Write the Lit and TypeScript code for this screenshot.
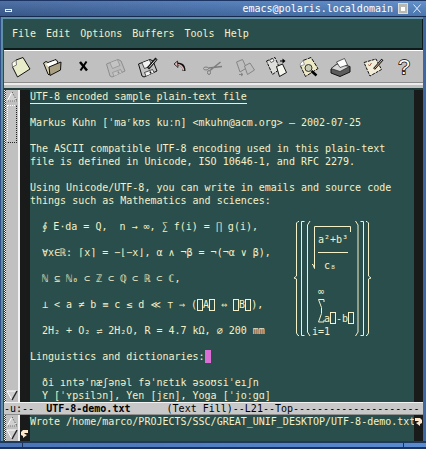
import { LitElement, html, svg, css } from "lit";
import { customElement } from "lit/decorators.js";

const MENUS = ["File", "Edit", "Options", "Buffers", "Tools", "Help"];

const INTRO = [
  "Markus Kuhn [ˈmaʳkʊs kuːn] <mkuhn@acm.org> — 2002-07-25",
  "",
  "The ASCII compatible UTF-8 encoding used in this plain-text",
  "file is defined in Unicode, ISO 10646-1, and RFC 2279.",
  "",
  "Using Unicode/UTF-8, you can write in emails and source code",
  "things such as Mathematics and sciences:",
  "",
];

const floppy = (stroke: string, fill: string, label: string) => svg`
  <path d="M2.5 9 L14 4.5 L17 6 L21 16 L8 22 L6 21 Z" fill=${fill} stroke=${stroke}/>
  <path d="M6 8 L8.5 13.5 L16 10.5 L13.5 5" fill=${label} stroke=${stroke} stroke-width="0.7"/>
  <path d="M10 21 L8.5 17.5 L16.5 14.5 L18 17.5" fill=${label} stroke=${stroke} stroke-width="0.7"/>
  <path d="M14 16.5 L15 18.5" stroke=${stroke} stroke-width="1.5"/>`;

const TOOLS = [
  { name: "New file", off: false, art: svg`
    <path d="M8 5 L15 2.5 L22 14 L9.500 22 L4.500 12 Z" fill="#e9ecc9" stroke="#111"/>
    <path d="M8 5 L4 8 L4.500 12 L8.500 10 Z" fill="#fbfbea" stroke="#777"/>` },
  { name: "Open", off: false, art: svg`
    <path d="M3.500 8 L6 6.500 L8 7.500 L16 4.500 L18 7 L9 20 L8 19 Z" fill="#d8d2b0" stroke="#111"/>
    <path d="M6 9 L15 5.500 L17.500 8 L9 12 Z" fill="#fff"/>
    <path d="M9 12 L21 7 L20.500 15 L10 20.500 Z" fill="#aaa084" stroke="#111"/>` },
  { name: "Close", off: false, art: svg`
    <path d="M8 7 L15 15.500" stroke="#000" stroke-width="2.500"/>
    <path d="M14.500 6.500 L8.500 15.500" stroke="#000" stroke-width="2"/>` },
  { name: "Save", off: true, art: floppy("#8d8d8d", "#bcbcbc", "#c4c4c4") },
  { name: "Save as", off: false, art: svg`${floppy("#111", "#c4c4c4", "#f2f2f2")}
    <path d="M20.500 3.500 L12 13.500" stroke="#111" stroke-width="3"/>
    <path d="M20 4.500 L13 12.500" stroke="#ddd" stroke-width="1"/>` },
  { name: "Undo", off: false, art: svg`
    <path d="M8 9 Q16 8 16 16" fill="none" stroke="#111" stroke-width="3"/>
    <path d="M8 9.500 Q14.500 9 15.500 15.500" fill="none" stroke="#e0b8b8" stroke-width="1.500"/>
    <path d="M9.500 6 L6 9 L10 12.500 Z" fill="#e0b8b8" stroke="#111" stroke-width="0.800"/>` },
  { name: "Cut", off: true, art: svg`
    <g fill="none" stroke="#7d7d7d">
      <ellipse cx="6" cy="13.500" rx="2.500" ry="1.500"/><ellipse cx="9" cy="17.500" rx="1.500" ry="2"/>
      <path d="M8.500 13 L22 11.500 M10 15.500 L20.500 7" stroke-width="1.500"/>
    </g>` },
  { name: "Copy", off: true, art: svg`
    <g fill="#bebebe" stroke="#858585">
      <path d="M4.500 7 L10.500 4.500 L14.500 13 L8 17 Z"/>
      <path d="M12.500 11 L18 8 L22.500 15 L15.500 19.500 Z"/>
      <path d="M7 19.500 h4 M9 18 l2 1.500 l-2 1.500" fill="none"/>
    </g>` },
  { name: "Paste", off: false, art: svg`
    <path d="M2.500 6 L11 2.500 L16 14 L8.500 19.500 Z" fill="#dededa" stroke="#111" stroke-dasharray="3 1"/>
    <path d="M5.500 5 L9 3.500 L10 6 L7 7.500 Z" fill="#fff" stroke="#333" stroke-width="0.700"/>
    <path d="M12.500 11.500 L18.500 9 L22.500 17.500 L15.500 21.500 Z" fill="#f5f5ee" stroke="#111"/>
    <path d="M16 6 h4" stroke="#000"/>
    <path d="M18.500 3.500 L21.500 6 L18.500 8.500 Z" fill="#000"/>` },
  { name: "Search", off: false, art: svg`
    <path d="M7 5.500 L15 2.500 L22 13.500 L9.500 21.500 L4.500 11 Z" fill="#eeeac6" stroke="#111" stroke-dasharray="4 1"/>
    <path d="M7 5.500 L4 9 L4.500 11 L8.500 9.500 Z" fill="#fff" stroke="#999"/>
    <path d="M15.500 16 L20.500 20.500" stroke="#000" stroke-width="2.500"/>
    <circle cx="12.500" cy="13" r="3.500" fill="#c9cdb6" stroke="#333"/>` },
  { name: "Print", off: false, art: svg`
    <path d="M3 14 L9 9 L22 11.500 L22 17 L12 21.500 L3 18 Z" fill="#5c5c5c" stroke="#111"/>
    <path d="M3 13.500 L9 9 L21.500 11.500 L12 16.500 Z" fill="#d8d8d8" stroke="#222" stroke-width="0.700"/>
    <path d="M8.500 7 L16.500 3.500 L19.500 10 L12 12.500 Z" fill="#fdfdfd" stroke="#222" stroke-width="0.700"/>` },
  { name: "Preferences", off: false, art: svg`
    <path d="M4 7.500 L16 4 L21.500 14.500 L10 21 Z" fill="#f1edd8" stroke="#111" stroke-dasharray="3 1"/>
    <path d="M8.500 9.500 l1 1.500 l2 -3" fill="none" stroke="#a2604a"/>
    <path d="M22.500 4.500 L14 14" stroke="#111" stroke-width="2.500"/>
    <path d="M22 5 L14.500 13.500" stroke="#dcbc9c"/>` },
  { name: "Help", off: false, art: svg`
    <text x="12" y="19" text-anchor="middle" font-family="Liberation Sans" font-size="21"
      fill="#fff" stroke="#000" stroke-width="1.500" paint-order="stroke">?</text>` },
];

@customElement("app-root")
export class AppRoot extends LitElement {
  static styles = css`
    :host {
      --bg: #2a4e4b;
      --ink: #f4f0c8;
      --grey: #c0c0c0;
      display: block;
      font: 10px/13px "DejaVu Sans Mono", "DejaVu Sans", "Noto Sans", monospace;
      color: var(--ink);
    }
    * { box-sizing: border-box; }
    button {
      font: inherit; color: inherit; background: none; border: 0; padding: 0; margin: 0;
    }
    svg { display: block; }
    .window {
      display: flex; flex-direction: column; min-height: 100vh; overflow: hidden;
      background: linear-gradient(90deg, #2d4f85, #3d67a4);
    }
    .title {
      display: flex; align-items: center; height: 17px; padding: 0 5px 0 5px; gap: 5px;
      border-top: 1px solid #1c3564; border-bottom: 1px solid #16294e;
      background:
        linear-gradient(180deg, #ffffff14, #00000022),
        linear-gradient(90deg, #40649c, #4a76b4 50%, #5688c8);
      color: #fff;
    }
    .title h1 { flex: 1; margin: 0; font: inherit; text-align: right; white-space: nowrap; }
    .min { width: 7px; height: 7px; display: flex; align-items: flex-end; }
    .min i { width: 7px; height: 3px; border: 1px solid #e6eefa; }
    .max { width: 10px; height: 11px; background: #b9b9b4; border: 1px solid #dcdcd8; display: grid; place-items: center; }
    .max i { width: 4px; height: 4px; background: #fff; }
    .frame {
      flex: 1; display: flex; flex-direction: column; background: var(--bg);
      margin: 0 3px 0 1px; border-left: 2px solid #5f8fa5; border-top: 2px solid #5f8fa5;
      padding-left: 1px;
    }
    .menu {
      display: flex; gap: 10px; height: 31px; align-items: center; padding-left: 8px;
      border-bottom: 2px solid #0c1a1a; border-right: 1px solid #0c1a1a;
    }
    .tools {
      display: flex; height: 38px; padding-bottom: 5px; background: var(--grey);
      border-top: 1px solid #fff; position: relative;
    }
    .tools button { width: 32px; height: 32px; display: grid; place-items: center; flex: none; }
    .tools::after {
      content: ""; position: absolute; left: 0; right: 0; bottom: 3px; height: 2px;
      background: #ececec; border-top: 1px solid #8d8d8d;
    }
    .pane { display: grid; grid-template-columns: 16px 10px minmax(0, 1fr) 9px; }
    .main { border-top: 2px solid #203c3a; }
    .fringe { background: #191b1b; }
    .echo .fringe { display: flex; flex-direction: column; justify-content: space-between; padding: 3px 1px; }
    .line { height: 13px; white-space: pre; }
    .heading { display: flex; }
    .heading span { box-shadow: 0 1px 0 var(--ink); }
    .maths { display: flex; }
    .maths svg { flex: none; width: 80px; height: 117px; }
    .maths .left { width: 264px; }
    .missing {
      display: inline-block; width: 6px; height: 12px; border: 1px solid var(--ink);
      vertical-align: bottom;
    }
    .cursor { display: inline-block; width: 6px; height: 13px; background: #da70d6; vertical-align: top; }
    .scroll {
      display: flex; flex-direction: column; background: var(--grey);
      border-right: 2px solid #f2f2f2; padding-left: 2px;
      background-image: conic-gradient(#333 25%, #eee 0 50%, #333 0 75%, #eee 0);
      background-size: 2px 2px;
    }
    .scroll .arrow { height: 13px; flex: none; background: var(--grey); }
    .trough { flex: 1; background: var(--grey); padding-top: 2px; }
    .thumb {
      height: 38px; border: 1px dotted #222; border-left-color: #fff; border-top-color: #fff;
      background: #c4c4c4; margin: 0 1px;
    }
    .mode {
      height: 13px; background: #c8c8c8; color: #000; white-space: pre; overflow: hidden;
      border-top: 1px solid #f2f2f2; border-bottom: 1px solid #8f8f8f; line-height: 11px;
    }
    .foot {
      display: flex; height: 8px; border-top: 2px solid #1d3a5c; border-bottom: 2px solid #1b3260;
      background: linear-gradient(90deg, #4a74b4, #5a8ad0); justify-content: space-between;
      padding: 0 22px;
    }
    .foot i { width: 1px; background: #1b3260; }
    .math-text { font: 10px "DejaVu Sans Mono", "DejaVu Sans", monospace; fill: var(--ink); stroke: none; }
  `;

  private arrow(up: boolean) {
    return html`<button class="arrow" aria-label=${up ? "Scroll up" : "Scroll down"}>
      <svg width="14" height="13" viewBox="0 0 14 13">
        ${up
          ? svg`<path d="M6 2 L11 11 H1 Z" fill="#d0d0d0" stroke="#fff"/><path d="M6 2 L11 11 H1" fill="none" stroke="#222" stroke-dasharray="1 1"/>`
          : svg`<path d="M1 2 H11 L6 11 Z" fill="#cfcfcf" stroke="#fff"/><path d="M11 2 L6 11" fill="none" stroke="#222" stroke-width="1.500"/>`}
      </svg>
    </button>`;
  }

  private curl(flip: boolean) {
    return html`<svg width="7" height="8" viewBox="0 0 7 8">
      <path transform=${flip ? "translate(7 0) scale(-1 1)" : ""} d="M0 0 H5 L7 2 V5 L5 6 V8 L1 5 L3 4 L4 3 H0 Z" fill="#fbe8cc"/>
    </svg>`;
  }

  private matrix() {
    return svg`<svg viewBox="294 220 80 117" fill="none" stroke="#f4f0c8" stroke-width="1" role="img" aria-label="Nested brackets">
      <path d="M299 221.500 h-1 l-1.500 1.500 v53 l-2.500 2 l2.500 1 v54 l1.500 2.500 h1"/>
      <path d="M304.500 221.500 h-3 v114 h3"/>
      <path d="M310 221 l-2.500 4 v107 l2.500 4"/>
      <path d="M355.500 221 l2.500 4 v107 l-2.500 4"/>
      <path d="M360.500 221.500 h3 v114 h-3"/>
      <path d="M366 221.500 h1 l1.500 1.500 v53 l2.500 2 l-2.500 1 v54 l-1.500 2.500 h-1"/>
      <path d="M312 264.500 h1 l1.500 4 V226.500 H350.500 V232"/>
      <path d="M318 252.500 H348"/>
      <path d="M324 302 v-2.500 H318.500 l3 8 v6 l-3 8.500 H324 v-2"/>
      <rect x="330.500" y="312.500" width="5" height="11"/>
      <rect x="348.500" y="312.500" width="5" height="11"/>
      <g class="math-text">
        <text x="318" y="243">a²+b³</text>
        <text x="324" y="269">c₈</text>
        <text x="318" y="295">∞</text>
        <text x="324" y="322">a</text>
        <text x="336" y="322">-b</text>
        <text x="312" y="335">i=1</text>
      </g>
    </svg>`;
  }

  render() {
    const box = html`<i class="missing"></i>`;
    const line = (t: unknown) => html`<div class="line">${t}</div>`;
    return html`<div class="window">
      <header class="title">
        <button class="min" aria-label="Minimize"><i></i></button>
        <h1>emacs@polaris.localdomain</h1>
        <button class="max" aria-label="Maximize"><i></i></button>
        <button aria-label="Close window">
          <svg width="8" height="9" viewBox="0 0 8 9"><path d="M0.500 0.500 L7.500 8.500 M7.500 0.500 L0.500 8.500" stroke="#e6eefa"/></svg>
        </button>
      </header>
      <div class="frame">
        <nav class="menu">${MENUS.map((m) => html`<button>${m}</button>`)}</nav>
        <div class="tools" role="toolbar">
          ${TOOLS.map((t) => html`<button aria-label=${t.name} ?disabled=${t.off}>
            <svg width="24" height="24" viewBox="0 0 24 24">${t.art}</svg>
          </button>`)}
        </div>
        <main class="pane main">
          <div class="scroll">${this.arrow(true)}<div class="trough"><div class="thumb"></div></div>${this.arrow(false)}</div>
          <div class="fringe"></div>
          <div class="text">
            <div class="line heading"><span>UTF-8 encoded sample plain-text file</span></div>
            ${line("")}
            ${INTRO.map(line)}
            <div class="maths">
              <div class="left">
                ${line("  ∮ E⋅da = Q,  n → ∞, ∑ f(i) = ∏ g(i),")}
                ${line("")}
                ${line("  ∀x∈ℝ: ⌈x⌉ = −⌊−x⌋, α ∧ ¬β = ¬(¬α ∨ β),")}
                ${line("")}
                ${line("  ℕ ⊆ ℕ₀ ⊂ ℤ ⊂ ℚ ⊂ ℝ ⊂ ℂ,")}
                ${line("")}
                ${line(html`  ⊥ &lt; a ≠ b ≡ c ≤ d ≪ ⊤ ⇒ (${box}A${box} ⇔ ${box}B${box}),`)}
                ${line("")}
                ${line("  2H₂ + O₂ ⇌ 2H₂O, R = 4.7 kΩ, ⌀ 200 mm")}
              </div>
              ${this.matrix()}
            </div>
            ${line("")}
            ${line(html`Linguistics and dictionaries:<i class="cursor"></i>`)}
            ${line("")}
            ${line("  ði ıntəˈnæʃənəl fəˈnɛtık əsoʊsiˈeıʃn")}
            ${line("  Y [ˈʏpsilɔn], Yen [jɛn], Yoga [ˈjoːgɑ]")}
          </div>
          <div class="fringe"></div>
        </main>
        <div class="mode">-u:--  <b>UTF-8-demo.txt</b>      (Text Fill)--L21--Top${"-".repeat(21)}</div>
        <footer class="pane echo">
          <div class="scroll">${this.arrow(true)}${this.arrow(false)}</div>
          <div class="fringe"><span></span>${this.curl(true)}</div>
          <div class="text">
            ${line("Wrote /home/marco/PROJECTS/SSC/GREAT_UNIF_DESKTOP/UTF-8-demo.txt")}
            ${line("")}
          </div>
          <div class="fringe">${this.curl(false)}</div>
        </footer>
      </div>
      <div class="foot"><i></i><i></i></div>
    </div>`;
  }
}
